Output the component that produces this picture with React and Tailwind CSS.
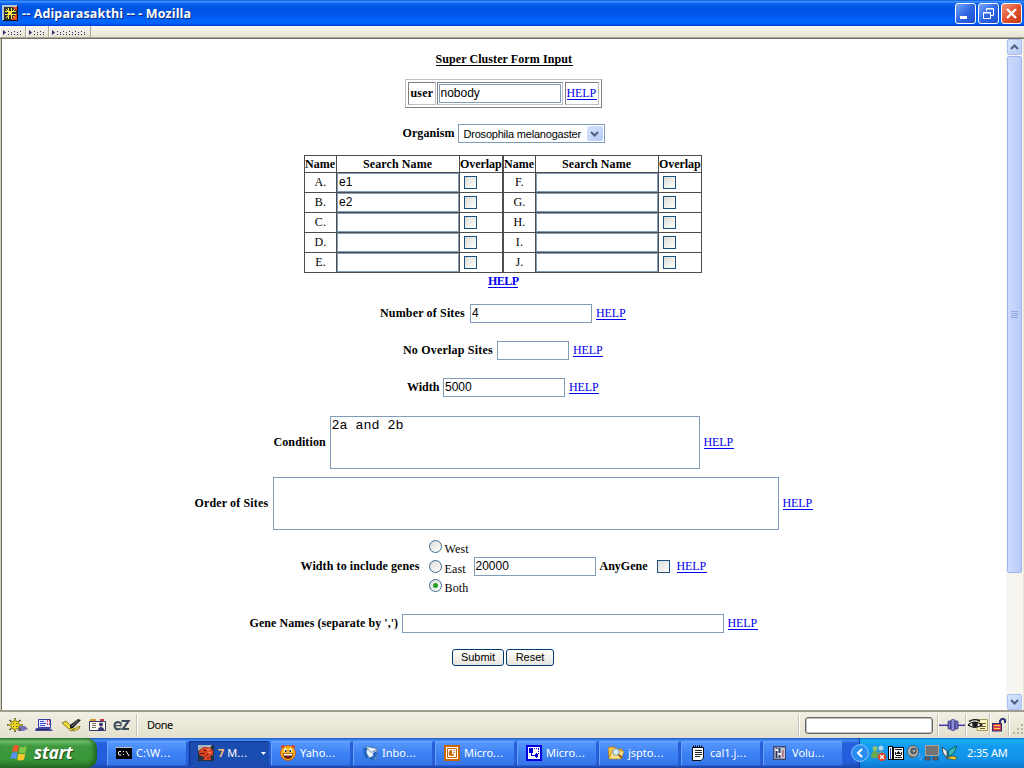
import React from "react";

const serif = "font-['Liberation_Serif',serif]";
const field = "border border-[#7f9db9] bg-white pl-px pr-[2px] font-['Liberation_Sans',sans-serif] text-[12px] leading-[17px] text-black whitespace-pre overflow-hidden";

function Svg({ w = 16, h = 16, children, className = "" }) {
  return (
    <svg width={w} height={h} viewBox={`0 0 ${w} ${h}`} className={`shrink-0 ${className}`}>
      {children}
    </svg>
  );
}

function Help({ bold }) {
  return (
    <a className={`${serif} block h-[13px] w-[30px] shrink-0 whitespace-nowrap border-b border-[#0000ee] text-[12px] leading-[13px] text-[#0000ee] ${bold ? "font-bold tracking-[-0.55px]" : "tracking-[-0.1px]"}`}>
      HELP
    </a>
  );
}

function Label({ className = "", children }) {
  return (
    <b className={`${serif} block shrink-0 whitespace-nowrap text-[12px] leading-[15px] text-black ${className}`}>
      {children}
    </b>
  );
}

function Row({ className = "", children }) {
  return <div className={`flex w-full items-center justify-center gap-1 ${className}`}>{children}</div>;
}

function Check({ className = "" }) {
  return <span className={`block size-[13px] shrink-0 border border-[#1c5180] bg-linear-to-br from-[#dcdcd7] to-white ${className}`} />;
}

function Radio({ on }) {
  return (
    <span className="flex size-[13px] shrink-0 items-center justify-center rounded-full border border-[#3b6a94] bg-linear-to-br from-[#dcdcd7] to-white">
      {on && <span className="size-[5px] rounded-full bg-[#21a121]" />}
    </span>
  );
}

function Chevron({ down }) {
  return (
    <Svg w={9} h={6}>
      <path d={down ? "M1 1 L4.5 4.5 L8 1" : "M1 5 L4.5 1.5 L8 5"} fill="none" stroke="#4d6185" strokeWidth="2" />
    </Svg>
  );
}

/* ---------- title bar ---------- */

function AppIcon() {
  return (
    <Svg className="ml-[2px]">
      <rect x="1" y="1" width="15" height="15" fill="#111" />
      <rect x="0" y="0" width="15" height="15" fill="#b9c6d0" />
      <rect x="2" y="2" width="13" height="13" fill="#2c3630" />
      <path d="M9 15L15 8V15Z M10 2H15V6Z" fill="#e8451d" />
      <path d="M6 3h1v11h-1zM9 3h1v11h-1zM3 6h11v1h-11zM3 9h11v1h-11z" fill="#ffe44a" />
      <path d="M4 4h1v1h-1zM12 4h1v1h-1zM4 12h1v1h-1zM12 12h1v1h-1zM5 5h1v1h-1zM11 5h1v1h-1zM5 11h1v1h-1zM11 11h1v1h-1zM7 7h2v2h-2z" fill="#ffe44a" />
    </Svg>
  );
}

function WinButton({ close, children }) {
  return (
    <span className={`flex size-[21px] items-center justify-center rounded-[3px] border border-white bg-linear-to-br ${close ? "from-[#f0937a] via-[#e2512b] to-[#c33a12]" : "from-[#7aa4f5] via-[#2f68e4] to-[#1c4fd0]"}`}>
      {children}
    </span>
  );
}

function TitleBar() {
  return (
    <div className="flex h-[26px] shrink-0 items-center bg-[linear-gradient(#0a51d8_0%,#3d95ff_6%,#0b62ef_14%,#0054e3_30%,#0058ea_60%,#0066ff_80%,#0061f5_90%,#003dd0_100%)]">
      <AppIcon />
      <span className="ml-1 flex-1 whitespace-pre pt-px font-['Open_Sans',sans-serif] text-[12.5px] font-bold leading-[20px] tracking-[0.12px] text-white [text-shadow:1px_1px_0_#0a2a80]">
        -- Adiparasakthi -- - Mozilla
      </span>
      <div className="flex gap-[2px] pr-[2px]">
        <WinButton>
          <Svg w={19} h={19}><path d="M4 12H11V15H4Z" fill="#fff" /></Svg>
        </WinButton>
        <WinButton>
          <Svg w={19} h={19}>
            <path d="M7.5 7V4.5H14.5V11.5H12M7 5H15" fill="none" stroke="#fff" />
            <path d="M4.5 8.5H11.5V14.5H4.5ZM4 9H12" fill="none" stroke="#fff" />
          </Svg>
        </WinButton>
        <WinButton close>
          <Svg w={19} h={19}><path d="M5 5L14 14M14 5L5 14" stroke="#fff" strokeWidth="2.4" /></Svg>
        </WinButton>
      </div>
    </div>
  );
}

function Grippy({ w, dots }) {
  return (
    <div className="flex h-[11px] items-center border-r border-[#aca899] border-l border-l-white">
      <Svg w={w} h={11}>
        <path d="M2 4V9L5 6.5Z" fill="#2b2b74" />
        {Array.from({ length: dots }, (_, i) => (
          <path key={i} d={i % 2 ? `M${7 + i * 3} 6h1v1h-1zM${7 + i * 3} 8h1v1h-1z` : `M${7 + i * 3} 5h1v1h-1zM${7 + i * 3} 8h1v1h-1z`} fill="#2b2b74" />
        ))}
      </Svg>
    </div>
  );
}

function Toolbar() {
  return (
    <div className="h-[13px] shrink-0 border-b border-b-[#716f64]">
      <div className="flex h-[12px] items-start border-b border-b-[#aca899] bg-linear-to-b from-[#f8f7f1] to-[#e6e3d2]">
        <Grippy w={24} dots={5} />
        <Grippy w={21} dots={4} />
        <Grippy w={40} dots={10} />
      </div>
    </div>
  );
}

/* ---------- form ---------- */

function HalfTable({ letters, values }) {
  const cell = "border-b border-r border-[#4d4d4d]";
  return (
    <div className="border-l border-t border-[#4d4d4d]">
      <div className="flex h-[17px]">
        <div className={`${cell} w-[32px]`}><Label className="pt-px">Name</Label></div>
        <div className={`${cell} flex w-[123px] justify-center`}><Label className="w-[70px] pt-px tracking-[0.1px]">Search Name</Label></div>
        <div className={`${cell} w-[43px]`}><Label className="pt-px tracking-[-0.05px]">Overlap</Label></div>
      </div>
      {letters.map((l, i) => (
        <div key={l} className="flex h-[20px]">
          <div className={`${cell} ${serif} w-[32px] text-center text-[12px] leading-[18px] tracking-[0.2px]`}>{l}.</div>
          <div className={`${cell} w-[123px]`}>
            <div className={`${field} h-[19px] w-[122px]`}>{values[i] || ""}</div>
          </div>
          <div className={`${cell} flex w-[43px] items-center pl-[4px]`}><Check /></div>
        </div>
      ))}
    </div>
  );
}

function Form() {
  return (
    <div className="flex flex-1 flex-col items-center overflow-hidden border-l border-[#716f64] bg-white pr-[2px]">
      <div className="mt-[13px] h-[14px] translate-x-px border-b border-black">
        <Label className="w-[137px] tracking-[0.08px]">Super Cluster Form Input</Label>
      </div>

      <div className="mt-[13px] flex h-[29px] w-[197px] gap-[2px] border border-b-[#808080] border-l-[#c0c0c0] border-r-[#808080] border-t-[#c0c0c0] p-[2px]">
        <div className="flex w-[28px] items-center border border-b-[#c0c0c0] border-l-[#808080] border-r-[#c0c0c0] border-t-[#808080] pl-[2px]">
          <Label className="tracking-[0.2px]">user</Label>
        </div>
        <div className="-ml-px flex w-[126px] items-center justify-center border border-b-[#c0c0c0] border-l-[#808080] border-r-[#c0c0c0] border-t-[#808080]">
          <div className={`${field} h-[19px] w-[122px]`}>nobody</div>
        </div>
        <div className="flex flex-1 items-center border border-b-[#c0c0c0] border-l-[#808080] border-r-[#c0c0c0] border-t-[#808080] pl-px">
          <Help />
        </div>
      </div>

      <Row className="mt-[16px]">
        <Label className="w-[52px] pl-px tracking-[0.1px]">Organism</Label>
        <div className="flex h-[19px] w-[147px] items-center justify-between border border-[#7f9db9] pl-[5px] pr-px">
          <span className="whitespace-nowrap font-['Liberation_Sans',sans-serif] text-[11px] leading-[16px] tracking-[-0.21px] text-black">Drosophila melanogaster</span>
          <span className="flex h-[15px] w-[16px] items-center justify-center rounded-[2px] bg-linear-to-br from-[#d8e4fd] to-[#b4caf8]"><Chevron down /></span>
        </div>
      </Row>

      <div className="mt-[12px] flex">
        <HalfTable letters={["A", "B", "C", "D", "E"]} values={["e1", "e2"]} />
        <HalfTable letters={["F", "G", "H", "I", "J"]} values={[]} />
      </div>

      <div className="mt-[2px]"><Help bold /></div>

      <Row className="mt-[16px]">
        <Label className="w-[86px] tracking-[0.16px]">Number of Sites</Label>
        <div className={`${field} h-[19px] w-[122px]`}>4</div>
        <Help />
      </Row>
      <Row className="mt-[18px]">
        <Label className="w-[90px] tracking-[0.2px]">No Overlap Sites</Label>
        <div className={`${field} h-[19px] w-[72px]`} />
        <Help />
      </Row>
      <Row className="mt-[18px]">
        <Label className="w-[32px]">Width</Label>
        <div className={`${field} h-[19px] w-[122px]`}>5000</div>
        <Help />
      </Row>
      <Row className="mt-[19px]">
        <Label className="w-[53px] pl-px tracking-[0.1px]">Condition</Label>
        <div className="h-[53px] w-[370px] border border-[#7f9db9] px-px font-['Liberation_Mono',monospace] text-[13.33px] leading-[17px] text-black">2a and 2b</div>
        <Help />
      </Row>
      <Row className="mt-[8px]">
        <Label className="w-[75px] pl-px tracking-[0.14px]">Order of Sites</Label>
        <div className="h-[53px] w-[506px] border border-[#7f9db9]" />
        <Help />
      </Row>
      <Row className="mt-[9px] h-[55px]">
        <Label className="w-[125px] pl-px tracking-[0.1px]">Width to include genes</Label>
        <div className={`${serif} mt-px w-[41px] self-start text-[12px] text-black`}>
          {["West", "East", "Both"].map((t) => (
            <div key={t} className="flex h-[19.5px] items-start gap-[3px]">
              <Radio on={t === "Both"} />
              <span className="pt-[2px] leading-[14px] tracking-[0.15px]">{t}</span>
            </div>
          ))}
        </div>
        <div className={`${field} h-[19px] w-[122px]`}>20000</div>
        <Label className="w-[49px]">AnyGene</Label>
        <Check className="ml-[4px] mr-[3px]" />
        <Help />
      </Row>
      <Row className="mt-[20px]">
        <Label className="w-[149px] pl-px tracking-[0.06px]">Gene Names (separate by ',')</Label>
        <div className={`${field} h-[19px] w-[322px]`} />
        <Help />
      </Row>
      <div className="mt-[16px] flex gap-[2px] font-['Liberation_Sans',sans-serif] text-[11px] leading-[15px] text-black">
        <button className="h-[17px] w-[52px] rounded-[3px] border border-[#003c74] bg-linear-to-b from-white to-[#e6e4da]">Submit</button>
        <button className="h-[17px] w-[48px] rounded-[3px] border border-[#003c74] bg-linear-to-b from-white to-[#e6e4da]">Reset</button>
      </div>
    </div>
  );
}

function ScrollBar() {
  const btn = "flex h-[16px] w-[15px] shrink-0 items-center justify-center rounded-[2px] border border-[#aac0f4] bg-linear-to-br from-[#d9e5fe] to-[#b9ccf9]";
  return (
    <div className="flex w-[17px] shrink-0 flex-col items-center bg-[#f6f5f0]">
      <div className={btn}><Chevron /></div>
      <div className="mt-px flex h-[517px] w-[15px] flex-col items-center justify-center gap-px rounded-[2px] border border-[#9db6ee] bg-linear-to-r from-[#cddafd] to-[#b9cbf8]">
        {[0, 1, 2, 3].map((i) => <span key={i} className="h-px w-[7px] bg-[#8ea8e4]" />)}
      </div>
      <div className="flex-1" />
      <div className={btn}><Chevron down /></div>
    </div>
  );
}

/* ---------- status bar ---------- */

function StatusIcons() {
  return (
    <div className="flex w-[136px] items-center pl-[6px]">
      <Svg w={22} h={16}>
        <path d="M11 9H19L22 12L17 14H12Z" fill="#7373b5" />
        <path d="M9 1V15M1 8H17M3.5 3L14.5 13M14.5 3L3.5 13" stroke="#50501e" strokeWidth="1.6" />
        <circle cx="9" cy="8" r="4.2" fill="#f3df27" stroke="#6f650e" />
        <path d="M9 2V14M2 8H16M5 4.5L13 11.5M13 4.5L5 11.5" stroke="#e8ce1c" />
        <path d="M7 6h1v1h-1zM10 6h1v1h-1zM7 9h1v1h-1zM10 9h1v1h-1z" fill="#50501e" />
      </Svg>
      <Svg w={18} h={16} className="ml-[7px]">
        <path d="M3.5 2.5H15.5V10.5H3.5Z" fill="#e8e8ff" stroke="#3c3c9c" />
        <path d="M5 4.5H9M5 6.5H11M5 8.5H10" stroke="#3c55c8" />
        <path d="M12.5 3V9M14.5 3V9" stroke="#d4356a" strokeDasharray="2 1" />
        <path d="M1 11H15L18 14H0Z" fill="#4a4aa0" /><path d="M2 12.5H14" stroke="#23236b" />
      </Svg>
      <Svg w={20} h={16} className="ml-[9px]">
        <path d="M0 6L4 4L9 9L13 12L9 14Z" fill="#f0dc36" stroke="#6b6420" strokeWidth=".8" />
        <path d="M8 8L16 2L19 3L11 11L8 12Z" fill="#222" /><path d="M16 3.5L10 9" stroke="#8a8a8a" />
        <path d="M10 13L18 9L17 12L12 14Z" fill="#f0dc36" stroke="#6b6420" strokeWidth=".7" />
      </Svg>
      <Svg w={17} h={16} className="ml-[7px]">
        <path d="M.5 4.5H16.5V13.5H.5Z" fill="#fffdf0" stroke="#35356f" />
        <path d="M1 3H7" stroke="#d89c2d" strokeWidth="2" /><path d="M11 3H15" stroke="#c93838" strokeWidth="2" />
        <path d="M3 6.5H7M3 8.5H7M3 10.5H7" stroke="#777" />
        <circle cx="12" cy="7.5" r="2" fill="#35356f" /><path d="M9 13C9 9 15 9 15 13Z" fill="#35356f" />
      </Svg>
      <Svg w={18} h={16} className="ml-[7px]">
        <path d="M8 6.5Q6.5 5 4.5 5Q1.5 5.5 1.5 9Q2 12.3 5 12.3Q7 12.3 8 11" fill="none" stroke="#3b4b5b" strokeWidth="2" />
        <path d="M3 8.6H8V6" fill="none" stroke="#3b4b5b" strokeWidth="1.3" />
        <path d="M8.5 4H15.5L10 12H16" fill="none" stroke="#3b4b5b" strokeWidth="2.2" />
      </Svg>
    </div>
  );
}

function StatusBar() {
  const sep = "h-[23px] w-[2px] shrink-0 border-l border-[#c5c2b2] bg-white";
  return (
    <div className="flex h-[28px] shrink-0 items-center border-t-2 border-t-[#a09d8e] bg-linear-to-b from-[#f1efe4] via-[#ebe8d8] to-[#e3e0d0]">
      <StatusIcons />
      <span className={sep} />
      <span className="ml-[9px] flex-1 font-['Noto_Sans',sans-serif] text-[11px] leading-[16px] tracking-[-0.5px] text-black">Done</span>
      <span className={sep} />
      <span className="ml-[5px] h-[17px] w-[128px] rounded-[3px] border border-[#686868] bg-white shadow-[inset_0_0_0_1px_#bebebe]" />
      <span className={`${sep} ml-[4px]`} />
      <Svg w={26} h={16}>
        <path d="M0 8H26" stroke="#3b3b94" strokeWidth="2" /><path d="M0 7.5H26" stroke="#9c9cdd" />
        <rect x="9" y="4" width="3" height="8" rx="1" fill="#7777c8" stroke="#24246f" strokeWidth=".8" />
        <rect x="12" y="2.5" width="4" height="11" rx="1.5" fill="#8f8fdd" stroke="#24246f" strokeWidth=".8" />
        <rect x="16" y="4" width="3" height="8" rx="1" fill="#7777c8" stroke="#24246f" strokeWidth=".8" />
      </Svg>
      <span className={sep} />
      <Svg w={21} h={16} className="ml-px">
        <path d="M10 2.5H19.5V13.5H9Z" fill="#fff5be" stroke="#a59a61" /><path d="M12 6.5H18M12 9.5H18M12 11.5H17" stroke="#63613f" />
        <path d="M0 8Q6 2 14 8Q7 12 2 9Z" fill="#fff" stroke="#111" strokeWidth="1.2" />
        <circle cx="7" cy="7.5" r="2.8" fill="#1c1c1c" /><path d="M1 4.5Q6 1 12 4" fill="none" stroke="#111" strokeWidth="1.4" />
      </Svg>
      <span className={sep} />
      <Svg w={16} h={16}>
        <path d="M9 7V4Q11.5 0 14 3V6" fill="none" stroke="#2d2d77" strokeWidth="2" />
        <rect x="1.5" y="6.5" width="9" height="7.5" fill="#db3d4b" stroke="#2d2d77" /><path d="M3 8.5H9M3 11.5H9" stroke="#f6d54a" />
      </Svg>
      <span className={`${sep} ml-px`} />
      <Svg w={14} h={26}>
        <path d="M11 12h2v2h-2zM7 16h2v2H7zM11 16h2v2h-2zM3 20h2v2H3zM7 20h2v2H7zM11 20h2v2h-2z" fill="#b8b4a2" />
      </Svg>
    </div>
  );
}

/* ---------- taskbar ---------- */

const ICONS = {
  cmd: (
    <Svg><rect y="2" width="16" height="12" fill="#000" /><path d="M0 2.5H16" stroke="#c0c0c0" /><path d="M5 6.5H3L2.5 7V9.5L3 10H5M7.5 6V7M7.5 9V10M10 6L13 11" fill="none" stroke="#fff" /></Svg>
  ),
  moz: (
    <Svg>
      <rect width="16" height="16" fill="#25323f" />
      <path d="M0 0H14L12 3L6 2L0 6Z" fill="#a9b6c0" />
      <path d="M1 6L4 3L8 2L13 3L15 6V10L12 11L13 15H5L7 12L3 11L1 9Z" fill="#dc4426" />
      <path d="M2 8.5H7M8 11L10 9M10 14L10 12" stroke="#6c1409" fill="none" />
      <path d="M6 5h2v1h-2z" fill="#240804" /><path d="M9 4L12 5M10 7L13 8" stroke="#ff9a72" />
    </Svg>
  ),
  yahoo: (
    <Svg><path d="M1 2L4 1M15 2L12 1" stroke="#e43b1c" strokeWidth="2" /><circle cx="8" cy="8" r="7.4" fill="#f8b81f" stroke="#d35c13" /><ellipse cx="5.5" cy="5.5" rx="1.5" ry="2" fill="#fff" /><ellipse cx="10.5" cy="5.5" rx="1.5" ry="2" fill="#fff" /><circle cx="5.8" cy="6" r=".9" /><circle cx="10.2" cy="6" r=".9" /><path d="M2.5 8.5H13.5Q12 14 8 14Q4 14 2.5 8.5Z" fill="#711d0a" /><path d="M3.5 9H12.5L12 10.5H4Z" fill="#fff" /></Svg>
  ),
  inbox: (
    <Svg>
      <path d="M4.5 1.5L15 3.5L14 14L3.5 12Z" fill="#eef4fb" stroke="#5a7a9a" />
      <path d="M5 3L9 7.5L14.5 4.5" fill="none" stroke="#6f8fae" />
      <path d="M0 5L3 2L6 5H4.5Q4 9 7 11L5 14Q0 11 1.5 5Z" fill="#2468c4" />
      <path d="M13 6L10 9.5H11.5Q11 12 8 12V15.5Q14 15 14.5 9.5H16Z" fill="#2468c4" />
    </Svg>
  ),
  ppt: (
    <Svg><rect width="16" height="16" fill="#cd6500" /><rect x="2.5" y="2.5" width="11" height="11" fill="#fff" stroke="#fff" /><path d="M3.5 3.5H12.5V12.5H3.5Z" fill="none" stroke="#cd6500" /><path d="M8 5A3 3 0 1 0 10.5 9H8Z" fill="#cd6500" /><path d="M9.5 5.5H11M9.5 7.5H11" stroke="#cd6500" /></Svg>
  ),
  visio: (
    <Svg>
      <rect width="16" height="16" fill="#0000e0" />
      <rect x="2" y="2" width="12" height="12" fill="#fff" />
      <path d="M3 3h4v5h-4zM5 8h1v3h-1zM5 10h7v1h-7zM10 8h1v5h-1zM9 9h3v3h-3z" fill="#0000e0" />
      <path d="M8 3.5H13M12.5 4V9" fill="none" stroke="#0000e0" strokeDasharray="1 1" />
    </Svg>
  ),
  folder: (
    <Svg><path d="M0 3L2 2H7L8 4H14V13H1Z" fill="#f6c443" stroke="#a36e10" strokeWidth=".7" /><path d="M1 14L4 6H16L13 14Z" fill="#ffe289" stroke="#b88219" strokeWidth=".7" /><circle cx="8" cy="7" r="3.3" fill="#d3eef8" stroke="#85999f" /><path d="M10.5 9.5L14 13" stroke="#925b20" strokeWidth="1.8" /></Svg>
  ),
  note: (
    <Svg><path d="M2.5 2.5H13.5V13L11 15.5H2.5Z" fill="#fff" stroke="#111" /><path d="M3 1.5H13" stroke="#000" strokeWidth="2" strokeDasharray="1 1" /><path d="M5 5.5H12M5 7.5H12M5 9.5H12M5 11.5H10" stroke="#222" /></Svg>
  ),
  volume: (
    <Svg><rect x="1.5" y="1.5" width="12" height="13" fill="#8a93ad" stroke="#3d456c" /><path d="M4.5 3V13M7.5 3V13" stroke="#303756" /><path d="M3 5H6M6 9H9" stroke="#f2f2f2" strokeWidth="2" /><path d="M9 3H13V13H9Z" fill="#c7c7cf" /><path d="M11 5V12" stroke="#973849" /></Svg>
  ),
};

function Task({ icon, text, active }) {
  return (
    <div className={`flex h-[25px] w-[80px] shrink-0 items-center gap-[4px] rounded-[2px] pl-[9px] ${active ? "bg-[#1b4cb0] shadow-[inset_1px_1px_1px_#0d348c]" : "bg-linear-to-b from-[#5b9bff] via-[#3c81f3] to-[#3574e8] shadow-[inset_1px_1px_0_#6ca3fa,inset_-1px_-1px_0_#2a62d3]"}`}>
      {ICONS[icon]}
      {active && <b className="-mr-px font-['Noto_Sans',sans-serif] text-[11px] leading-[16px] text-[#ffbf66]">7</b>}
      <span className="flex-1 whitespace-nowrap font-['Noto_Sans',sans-serif] text-[11px] leading-[16px] text-white">
        {text}
        <span className="tracking-[0.5px]">...</span>
      </span>
      {active && <Svg w={5} h={3} className="mr-[3px]"><path d="M0 0H5L2.5 3Z" fill="#fff" /></Svg>}
    </div>
  );
}

function Tray() {
  return (
    <div className="relative flex h-full w-[165px] shrink-0 items-center border-l border-[#0b3da0] bg-[linear-gradient(#0f77d6_0%,#19b0f5_8%,#139bee_25%,#1290e8_75%,#0d78cd_100%)] pl-[10px]">
      <span className="absolute -left-[9px] top-[6px]">
        <Svg w={18} h={18}><circle cx="9" cy="9" r="8.4" fill="#2a8bf0" stroke="#9fd2ff" strokeWidth=".8" /><path d="M11 5L7 9L11 13" fill="none" stroke="#fff" strokeWidth="2" /></Svg>
      </span>
      <Svg>
        <circle cx="5" cy="3.5" r="2.5" fill="#8fc46a" /><path d="M1 13Q1 6 5 6Q9 6 8 13Z" fill="#6aa84e" /><circle cx="11" cy="3" r="2.5" fill="#a5d8e8" /><path d="M8 12Q7 5 11 5Q15 6 14 12Z" fill="#5a9bb4" />
        <circle cx="12" cy="12" r="4" fill="#e23a1b" /><path d="M10 10L14 14M14 10L10 14" stroke="#fff" strokeWidth="1.4" />
      </Svg>
      <Svg className="ml-[2px]"><rect x=".5" y="1.5" width="4" height="13" fill="#fff" stroke="#000" /><path d="M2.5 3V14" stroke="#2846c8" /><rect x="5.5" y="2.5" width="10" height="12" fill="#f4f4f4" stroke="#000" /><path d="M7 4.5H14M7 12.5H14M7.5 7V10M13.5 7V10" stroke="#222" /><path d="M8 9L10.5 6L13 9ZM8 10h5v1h-5z" /></Svg>
      <Svg className="ml-[2px]"><ellipse cx="7" cy="6.5" rx="5.5" ry="6" fill="#b5babb" stroke="#4a5358" /><circle cx="7.5" cy="6" r="3.4" fill="#575e62" /><circle cx="8" cy="6" r="1.3" fill="#a9aeb0" /><path d="M1.5 9L6 13.5L9 12Z" fill="#6a6c64" /><path d="M12 13Q14 11 14 8M14 15Q16 13 16 10" fill="none" stroke="#7fa6f5" /></Svg>
      <Svg className="ml-[2px]"><rect x="1.5" y=".5" width="13" height="10" fill="#747474" stroke="#a7a49b" /><path d="M1 12H6V15H1ZM9 12H14V15H9Z" fill="#696969" stroke="#333" strokeWidth=".7" /></Svg>
      <Svg className="ml-[2px]"><path d="M0 2L5 6V13L1 8Z" fill="#e9f2ef" stroke="#29383f" strokeWidth=".9" /><path d="M15 1L7 5L6 12L12 8Z" fill="#35bdb6" stroke="#0d5961" strokeWidth=".9" /><path d="M4 13L13 15L15 12L10 11Z" fill="#e5d33b" stroke="#484014" strokeWidth=".7" /></Svg>
      <span className="ml-[9px] whitespace-nowrap font-['Noto_Sans',sans-serif] text-[11px] leading-[16px] tracking-[-0.15px] text-white">2:35 AM</span>
    </div>
  );
}

function Taskbar() {
  return (
    <div className="flex h-[30px] shrink-0 items-center bg-[linear-gradient(#2058c6_0%,#3f8cf3_8%,#265fdd_18%,#245ddb_80%,#1c46a8_100%)]">
      <div className="flex h-full w-[97px] shrink-0 items-center rounded-r-[10px] bg-[linear-gradient(#2d7a2b_0%,#6dbd6a_10%,#3f983e_28%,#389838_70%,#2a702a_100%)] pl-[10px] shadow-[inset_-3px_-1px_4px_#1f641f]">
        <Svg w={19} h={18}>
          <path d="M3.5 2Q6.5 0 9 2L7.7 8Q5 6.5 2 8Z" fill="#f0582a" />
          <path d="M10 2.5Q13 4 17 2L15.5 8.5Q12 10 8.8 8.5Z" fill="#83c843" />
          <path d="M1.7 9Q5 7.5 7.5 9L6.2 15Q3.5 13.5 .5 15Z" fill="#5b91ec" />
          <path d="M8.5 9.5Q12 11 15.3 9.5L14 15.5Q10.5 17.5 7.2 15.5Z" fill="#fbc92e" />
        </Svg>
        <span className="ml-[5px] font-['Open_Sans',sans-serif] text-[17px] font-bold italic leading-[22px] tracking-[-0.1px] text-white [text-shadow:1px_1px_1px_#1c4a1c]">start</span>
      </div>
      <div className="ml-[10px] flex flex-1 gap-[2px]">
        <Task icon="cmd" text="C:\W" />
        <Task icon="moz" text="M" active />
        <Task icon="yahoo" text="Yaho" />
        <Task icon="inbox" text="Inbo" />
        <Task icon="ppt" text="Micro" />
        <Task icon="visio" text="Micro" />
        <Task icon="folder" text="jspto" />
        <Task icon="note" text="cal1.j" />
        <Task icon="volume" text="Volu" />
      </div>
      <Tray />
    </div>
  );
}

export default function App() {
  return (
    <div className="flex h-[768px] w-[1024px] flex-col overflow-hidden bg-[#ece9d8]">
      <TitleBar />
      <Toolbar />
      <div className="flex min-h-0 flex-1 border-l border-[#d4d0c0] pr-px">
        <Form />
        <ScrollBar />
      </div>
      <StatusBar />
      <Taskbar />
    </div>
  );
}
